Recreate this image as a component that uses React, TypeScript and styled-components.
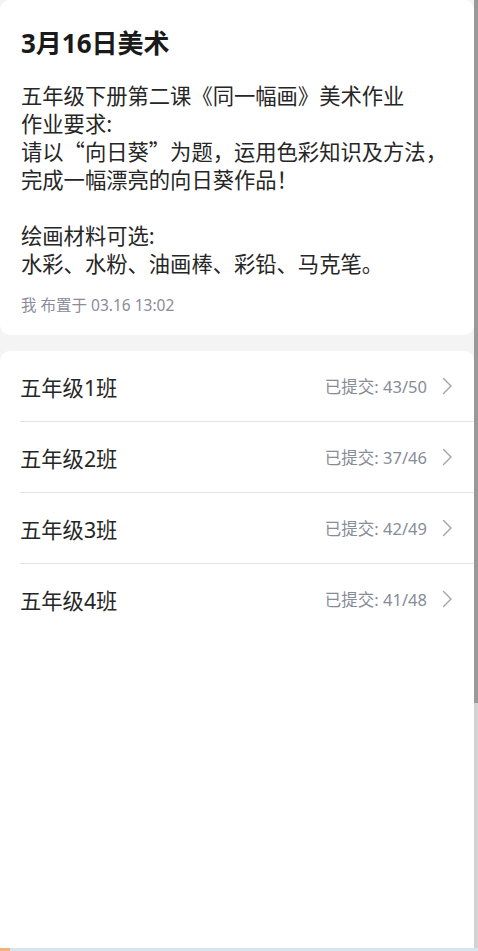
import React from 'react';
import styled, { createGlobalStyle } from 'styled-components';

const GlobalStyle = createGlobalStyle`
  html, body {
    margin: 0;
    padding: 0;
    height: 100%;
    overflow: hidden;
    background: #f4f4f4;
  }
  #root {
    height: 100%;
  }
  * {
    box-sizing: border-box;
  }
`;

const Page = styled.div`
  height: 100vh;
  display: flex;
  flex-direction: column;
  font-family: 'Noto Sans', 'Noto Sans CJK SC', sans-serif;
  color: #1f1f1f;
`;

const Viewport = styled.div`
  flex: 1;
  display: flex;
  min-height: 0;
`;

const Scroller = styled.div`
  flex: 1;
  overflow: hidden;
  background: #f4f4f4;
`;

// drawn scrollbar, the headless browser hides the native one
const ScrollTrack = styled.div`
  width: 4px;
  flex-shrink: 0;
  background: #d3d3d3;
`;

const ScrollThumb = styled.div`
  background: #999999;
`;

const Content = styled.div`
  display: flex;
  flex-direction: column;
  gap: 16px;
`;

const Card = styled.section<{ $fill?: boolean }>`
  background: #ffffff;
  border-radius: 10px;
  min-height: ${(p) => (p.$fill ? '927px' : 'auto')};
`;

const TaskCard = styled(Card)`
  padding: 26px 21px 20px;
`;

const Title = styled.h1`
  margin: 0 0 21px;
  font-size: 26px;
  line-height: 34px;
  font-weight: 700;
  color: #1a1a1a;
`;

const Body = styled.div`
  font-family: 'Noto Sans CJK SC', 'Noto Sans', sans-serif;
  font-size: 21.3px;
  line-height: 28px;
  color: #262626;
  white-space: pre-line;
`;

const Meta = styled.div`
  margin-top: 18px;
  font-size: 15.5px;
  line-height: 20px;
  color: #8a8d99;
`;

const ClassRow = styled.div<{ $last?: boolean }>`
  height: ${(p) => (p.$last ? '70px' : '71px')};
  margin-left: 20px;
  padding-right: 21px;
  display: flex;
  align-items: center;
  border-bottom: ${(p) => (p.$last ? 'none' : '1px solid #e3e3e3')};
  cursor: pointer;
`;

const ClassName = styled.span`
  flex: 1;
  font-size: 21.3px;
  color: #262626;
`;

const Submitted = styled.span`
  font-size: 16.5px;
  color: #878c97;
  margin-right: 15px;
`;

const Footer = styled.div`
  height: 3px;
  flex-shrink: 0;
  display: flex;
  background: #d6e6ee;
`;

const FooterMark = styled.div`
  width: 10px;
  background: #f6b17a;
`;

const Chevron = () => (
  <svg width="11" height="18" viewBox="0 0 11 18" fill="none">
    <path d="M1.5 1.5 L9 9 L1.5 16.5" stroke="#a3a3a3" strokeWidth="1.4" strokeLinecap="round" strokeLinejoin="round" />
  </svg>
);

const classes = [
  { name: '五年级1班', done: 43, total: 50 },
  { name: '五年级2班', done: 37, total: 46 },
  { name: '五年级3班', done: 42, total: 49 },
  { name: '五年级4班', done: 41, total: 48 },
];

const bodyText = `五年级下册第二课《同一幅画》美术作业
作业要求:
请以“向日葵”为题，运用色彩知识及方法，
完成一幅漂亮的向日葵作品！

绘画材料可选:
水彩、水粉、油画棒、彩铅、马克笔。`;

// visible height / content height, as the thumb shows it
const thumbRatio = 948 / 1278;

export default function App() {
  return (
    <>
      <GlobalStyle />
      <Page>
        <Viewport>
          <Scroller>
            <Content>
              <TaskCard>
                <Title>3月16日美术</Title>
                <Body>{bodyText}</Body>
                <Meta>我 布置于 03.16 13:02</Meta>
              </TaskCard>
              <Card $fill>
                {classes.map((c, i) => (
                  <ClassRow key={c.name} $last={i === classes.length - 1}>
                    <ClassName>{c.name}</ClassName>
                    <Submitted>
                      已提交: {c.done}/{c.total}
                    </Submitted>
                    <Chevron />
                  </ClassRow>
                ))}
              </Card>
            </Content>
          </Scroller>
          <ScrollTrack>
            <ScrollThumb style={{ height: `${thumbRatio * 100}%` }} />
          </ScrollTrack>
        </Viewport>
        <Footer>
          <FooterMark />
        </Footer>
      </Page>
    </>
  );
}
